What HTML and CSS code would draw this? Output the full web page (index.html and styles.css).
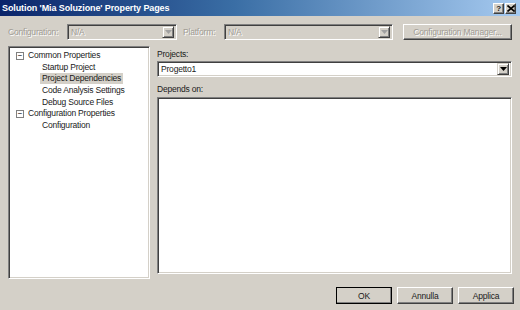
FILE: index.html
```html
<!DOCTYPE html>
<html>
<head>
<meta charset="utf-8">
<link rel="stylesheet" href="styles.css">
</head>
<body>
<div class="dialog">
  <div class="titlebar">
    <span class="title">Solution 'Mia Soluzione' Property Pages</span>
    <div class="tbtns">
      <span class="tbtn help">?</span>
      <span class="tbtn close"><svg width="8" height="7" viewBox="0 0 8 7"><path d="M0.5 0.5 L7.5 6.5 M7.5 0.5 L0.5 6.5" stroke="#000" stroke-width="1.6"/></svg></span>
    </div>
  </div>
  <div class="toolbar">
    <span class="lbl disabled lbl-config">Configuration:</span>
    <div class="combo combo-dis combo-config"><span class="val disabled">N/A</span><span class="arrow dis"><svg width="7" height="4" viewBox="0 0 7 4"><path d="M0 0 H7 L3.5 4 Z" fill="#a0a0a0"/></svg></span></div>
    <span class="lbl disabled lbl-plat">Platform:</span>
    <div class="combo combo-dis combo-plat"><span class="val disabled">N/A</span><span class="arrow dis"><svg width="7" height="4" viewBox="0 0 7 4"><path d="M0 0 H7 L3.5 4 Z" fill="#a0a0a0"/></svg></span></div>
    <span class="btn btn-cfg disabled">Configuration Manager...</span>
  </div>
  <div class="main">
    <div class="tree sunken">
      <div class="node parent"><span class="box">−</span><span class="txt">Common Properties</span></div>
      <div class="node child"><span class="txt">Startup Project</span></div>
      <div class="node child"><span class="txt sel">Project Dependencies</span></div>
      <div class="node child"><span class="txt">Code Analysis Settings</span></div>
      <div class="node child"><span class="txt">Debug Source Files</span></div>
      <div class="node parent"><span class="box">−</span><span class="txt">Configuration Properties</span></div>
      <div class="node child"><span class="txt">Configuration</span></div>
    </div>
    <div class="right">
      <div class="flbl flbl-proj">Projects:</div>
      <div class="combo combo-proj"><span class="val">Progetto1</span><span class="arrow"><svg width="7" height="4" viewBox="0 0 7 4"><path d="M0 0 H7 L3.5 4 Z" fill="#000"/></svg></span></div>
      <div class="flbl flbl-dep">Depends on:</div>
      <div class="listbox sunken"></div>
    </div>
  </div>
  <div class="footer">
    <span class="btn btn-def">OK</span>
    <span class="btn">Annulla</span>
    <span class="btn">Applica</span>
  </div>
</div>
</body>
</html>
```
FILE: styles.css
```css
* { box-sizing: border-box; }
html, body { margin: 0; padding: 0; }
body {
  width: 520px; height: 310px; overflow: hidden;
  background: #d4d0c8;
  font-family: "Liberation Sans", Arial, sans-serif;
  font-size: 8.5px;
  letter-spacing: -0.2px;
  color: #1a1a1a;
}
.dialog { width: 520px; height: 310px; display: flex; flex-direction: column; }
.titlebar {
  height: 16px;
  background: linear-gradient(to right, #0a246a 0%, #3a6ea5 45%, #a6caf0 100%);
  display: flex; align-items: center; justify-content: space-between;
  padding: 0 4px 0 2px;
}
.title { color: #fff; font-weight: bold; font-size: 9px; letter-spacing: -0.1px; }
.tbtns { display: flex; gap: 1px; }
.tbtn {
  width: 11px; height: 11px; background: #d4d0c8;
  border: 1px solid; border-color: #fff #404040 #404040 #fff;
  box-shadow: inset -1px -1px #808080;
  font-size: 8px; font-weight: bold; line-height: 9px; text-align: center;
  display: flex; align-items: center; justify-content: center;
}
.toolbar {
  margin-top: 8px; height: 16px;
  display: flex; align-items: center; padding: 0 8px;
}
.disabled { color: #a09c94; text-shadow: 1px 1px #fff; }
.lbl-config { width: 59px; }
.lbl-plat { width: 41px; margin-left: 6px; }
.combo {
  height: 16px; display: flex; align-items: center; justify-content: space-between;
  border: 1px solid; border-color: #808080 #fff #fff #808080;
  box-shadow: inset 1px 1px #404040, inset -1px -1px #d4d0c8;
  padding: 2px 2px 2px 3px;
}
.combo-dis { background: #d4d0c8; }
.combo-config { width: 110px; }
.combo-plat { width: 169px; }
.val { line-height: 11px; }
.arrow {
  width: 12px; height: 12px; background: #d4d0c8;
  border: 1px solid; border-color: #d4d0c8 #404040 #404040 #d4d0c8;
  box-shadow: inset 1px 1px #fff, inset -1px -1px #808080;
  display: flex; align-items: center; justify-content: center;
}
.btn {
  height: 16px; display: flex; align-items: center; justify-content: center;
  border: 1px solid; border-color: #fff #404040 #404040 #fff;
  box-shadow: inset -1px -1px #808080, inset 1px 1px #d4d0c8;
  background: #d4d0c8;
}
.btn-cfg { width: 109px; margin-left: 10px; }
.main { display: flex; margin-top: 6px; padding: 0 8px; height: 233px; }
.sunken {
  background: #fff;
  border: 1px solid; border-color: #808080 #fff #fff #808080;
  box-shadow: inset 1px 1px #404040, inset -1px -1px #d4d0c8;
}
.tree { width: 142px; height: 233px; padding: 3px 2px; }
.node { height: 11.6px; display: flex; align-items: center; }
.parent { padding-left: 5px; }
.child { padding-left: 29px; }
.box {
  width: 8px; height: 8px; border: 1px solid #808080; background: #fff;
  font-size: 8px; line-height: 6px; display: flex; align-items: center; justify-content: center;
  margin-right: 2px; color: #000;
}
.txt { padding: 0 2px; line-height: 11px; }
.sel { background: #d4d0c8; }
.right { margin-left: 7px; width: 355px; display: flex; flex-direction: column; }
.flbl-proj { height: 15px; padding-top: 3px; }
.combo-proj { width: 355px; background: #fff; height: 16px; }
.flbl-dep { height: 20px; padding-top: 7px; }
.listbox { width: 355px; height: 177px; }
.footer {
  margin-top: 8px; display: flex; gap: 5px; justify-content: flex-end; padding-right: 6px;
}
.footer .btn { width: 56px; height: 17px; }
.btn-def { outline: 1px solid #000; outline-offset: -1px; }
```
